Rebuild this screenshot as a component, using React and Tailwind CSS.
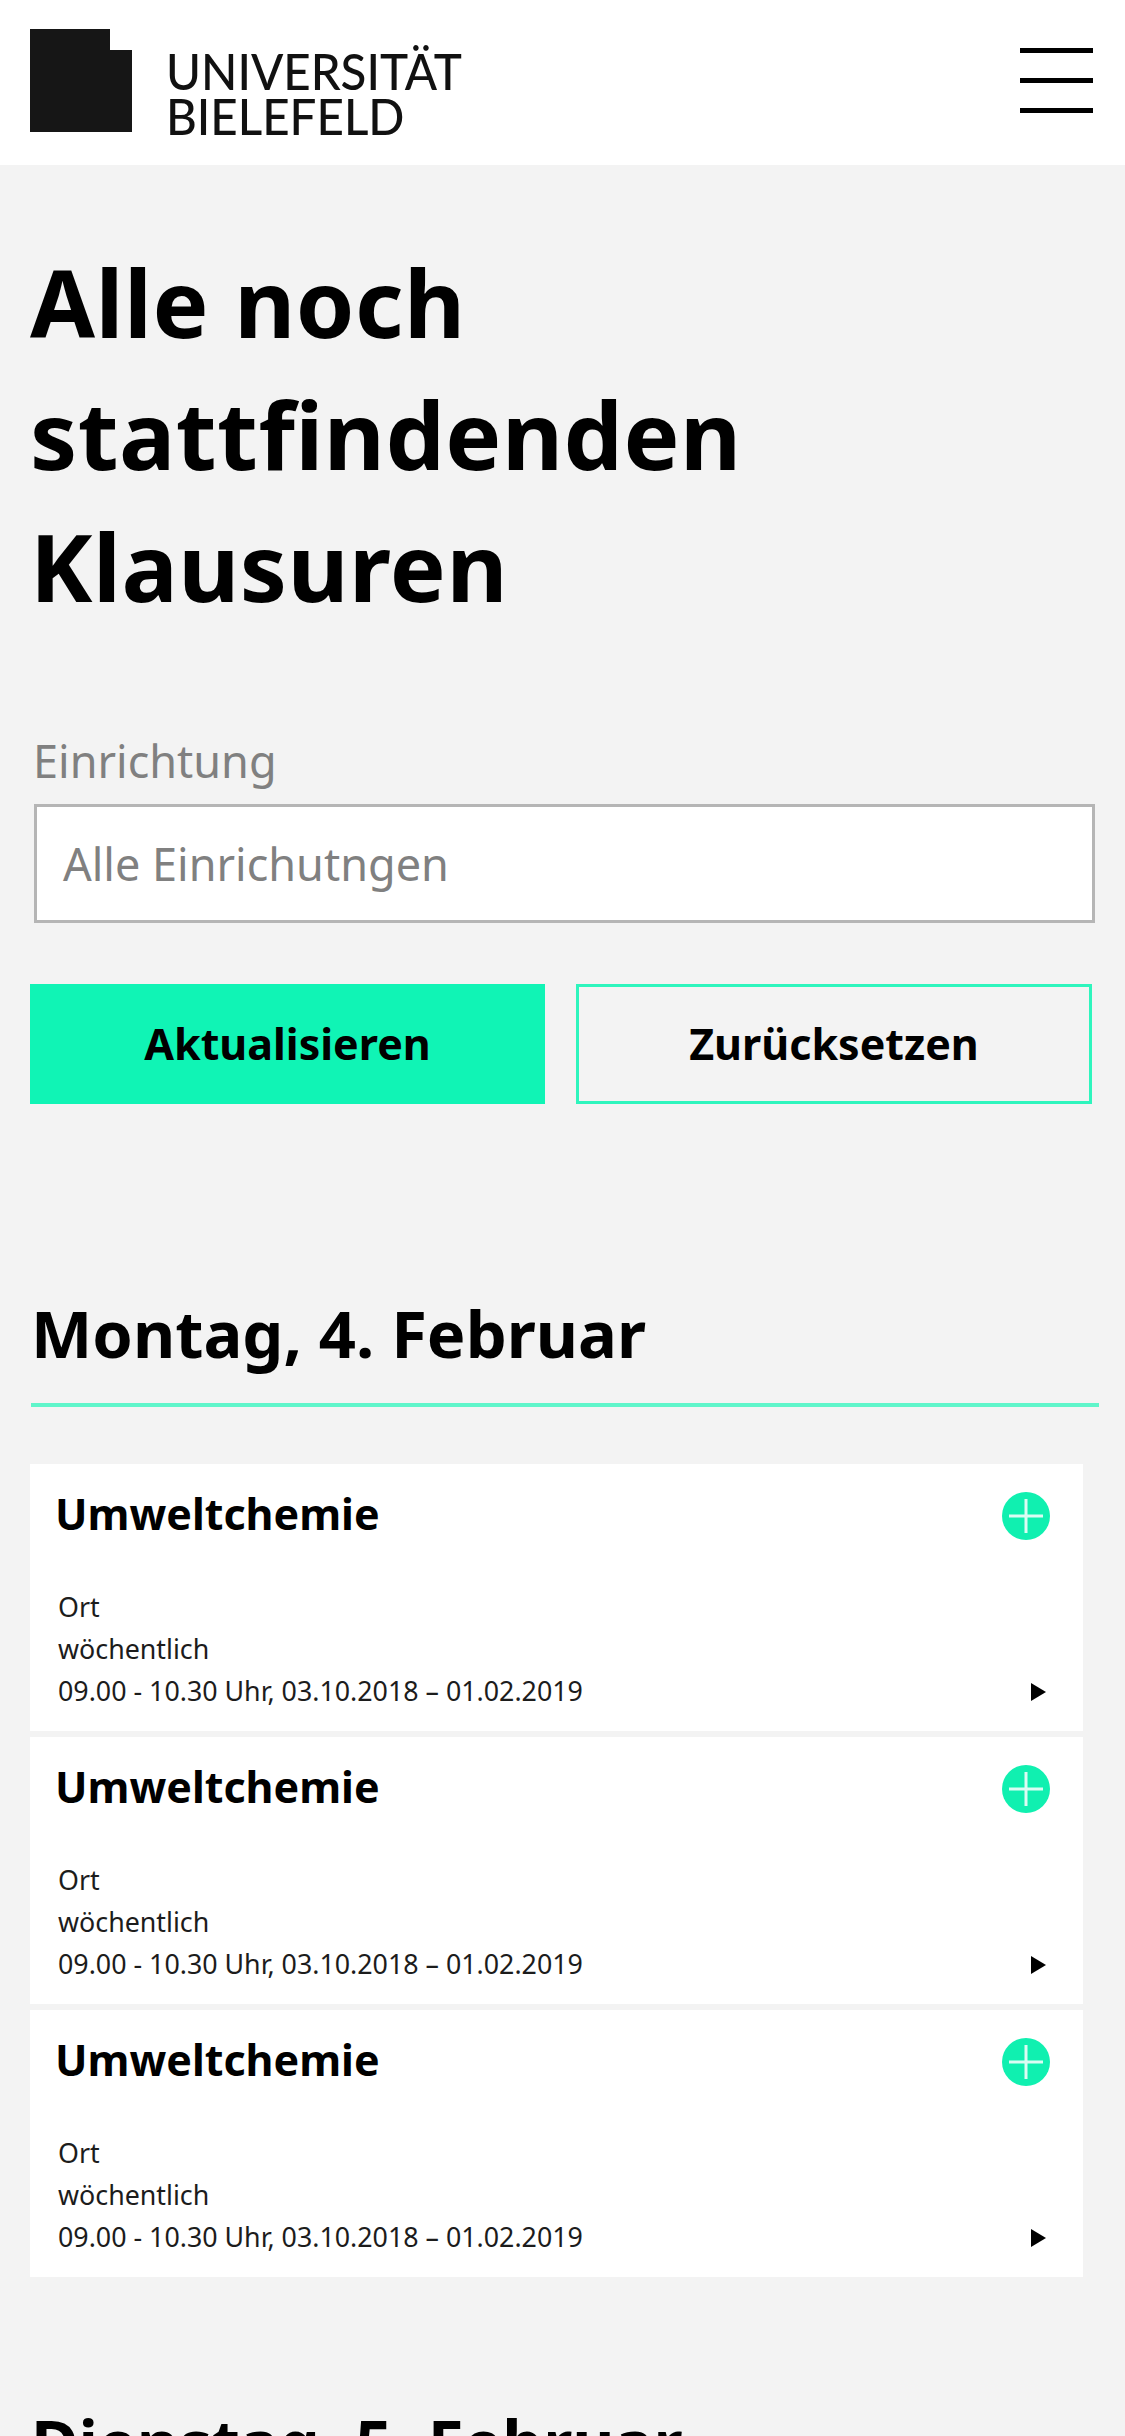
function Card() {
  return (
    <div className="relative h-[267px] bg-white pl-[25px] pt-[21px] text-black">
      <div className="h-[58px] text-[43px] leading-[58px] font-bold">Umweltchemie</div>
      <div className="mt-[43px] pl-[3px] text-[26.8px] leading-[42px] text-[#1c1c1c]">
        <div>Ort</div>
        <div>wöchentlich</div>
        <div>09.00 - 10.30 Uhr, 03.10.2018 – 01.02.2019</div>
      </div>
      <svg className="absolute left-[970px] top-[26px] h-[52px] w-[52px]" viewBox="0 0 52 52">
        <circle cx="26" cy="26" r="24" fill="#10f0b0" />
        <path d="M26 9V43M9 26H43" stroke="#fff" strokeWidth="3" opacity="0.85" />
      </svg>
      <svg className="absolute left-[1001px] top-[219px] h-[18px] w-[15px]" viewBox="0 0 15 18">
        <path d="M0 0L15 9L0 18Z" fill="#000" />
      </svg>
    </div>
  );
}

export default function App() {
  return (
    <div className="h-[2436px] overflow-hidden bg-[#f3f3f3] font-['Noto_Sans',sans-serif] text-black">
      <header className="flex h-[165px] items-start justify-between bg-white pl-[30px] pr-[32px] pt-[29px]">
        <div className="flex items-start">
          <svg className="h-[103px] w-[102px]" viewBox="0 0 102 103">
            <path d="M0 0H80V21H102V103H0Z" fill="#161616" />
          </svg>
          <div className="ml-[34px] mt-[20px] w-[300px] font-['Lato',sans-serif] text-[50px] leading-[45px] font-medium text-[#111]">
            <div className="origin-left scale-x-[0.95] whitespace-nowrap">UNIVERSITÄT</div>
            <div className="origin-left scale-x-[0.95] whitespace-nowrap">BIELEFELD</div>
          </div>
        </div>
        <div className="mt-[19px] flex w-[73px] flex-col gap-[25px]">
          <div className="h-[5px] bg-black" />
          <div className="h-[5px] bg-black" />
          <div className="h-[5px] bg-black" />
        </div>
      </header>

      <main className="pl-[30px] pr-[26px]">
        <h1 className="mt-[71px] text-[94px] leading-[132px] font-bold tracking-[0.5px]">
          Alle noch<br />stattfindenden<br />Klausuren
        </h1>

        <label className="mt-[99px] block pl-[3px] text-[45px] leading-[60px] text-[#808080]">Einrichtung</label>
        <div className="ml-[4px] mt-[13px] mr-[4px] flex h-[119px] items-center border-[3px] border-[#b5b5b5] bg-white pl-[26px] text-[45px] text-[#808080]">
          Alle Einrichutngen
        </div>

        <div className="mt-[61px] flex gap-[31px]">
          <button className="h-[120px] w-[515px] bg-[#10f4b5] text-[43px] font-bold text-black">Aktualisieren</button>
          <button className="h-[120px] w-[516px] border-[3px] border-[#2ef5bd] text-[43px] font-bold text-black">Zurücksetzen</button>
        </div>

        <h2 className="mt-[185px] pl-[1px] text-[65px] leading-[88px] font-bold">Montag, 4. Februar</h2>
        <div className="mt-[26px] ml-[1px] h-[4px] w-[1068px] bg-[#5ff5ca]" />

        <div className="mt-[57px] flex w-[1053px] flex-col gap-[6px]">
          <Card />
          <Card />
          <Card />
        </div>

        <h2 className="mt-[121px] pl-[1px] text-[65px] leading-[88px] font-bold">Dienstag, 5. Februar</h2>
      </main>
    </div>
  );
}
